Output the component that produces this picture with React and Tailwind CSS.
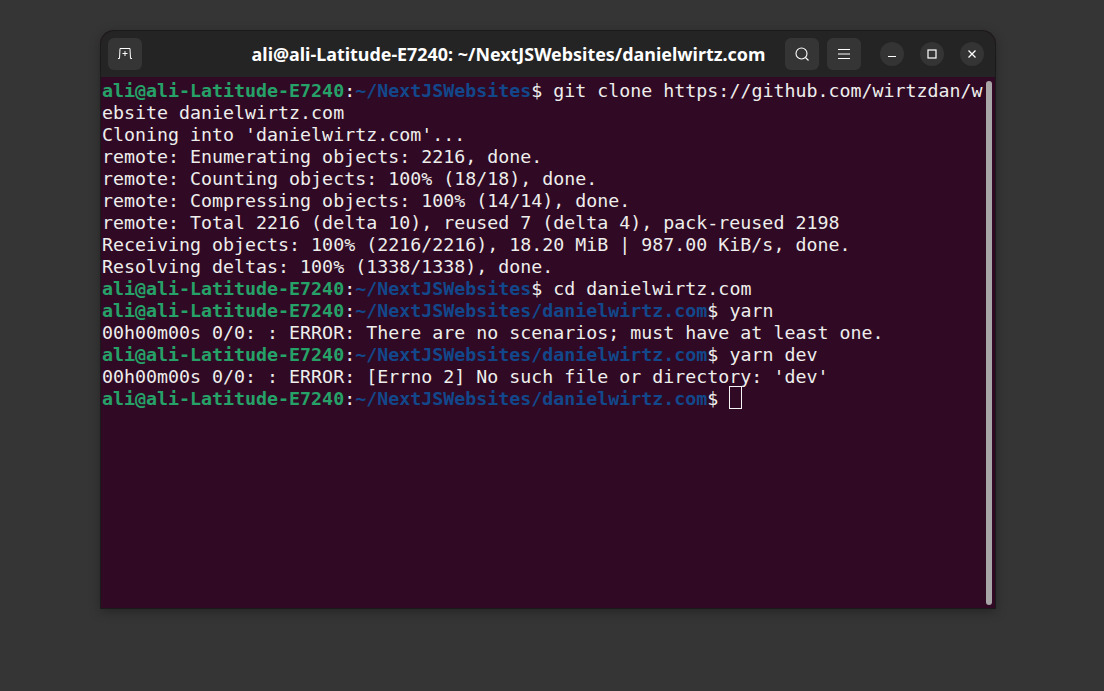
const G = "ali@ali-Latitude-E7240";
function Prompt({ path, cmd, cursor }) {
  return (
    <div>
      <span className="font-bold text-[#26a269]">{G}</span>
      <span>:</span>
      <span className="font-bold text-[#12488b]">{path}</span>
      <span>$ {cmd}</span>
      {cursor && <span className="inline-block w-[13px] h-[23px] -mt-[2px] border border-[#f4f4f4] align-top box-border" />}
    </div>
  );
}
const Out = ({ children }) => <div>{children}</div>;

function IconBtn({ children }) {
  return (
    <div className="w-[34px] h-[32px] rounded-[6px] bg-[#353535] flex items-center justify-center text-white">
      {children}
    </div>
  );
}
function WinBtn({ children }) {
  return (
    <div className="w-[24px] h-[24px] rounded-full bg-[#343434] flex items-center justify-center text-white">
      {children}
    </div>
  );
}

export default function App() {
  return (
    <div className="w-[1104px] h-[691px] bg-[#353535] pt-[31px] pl-[101px] overflow-hidden">
      <div className="w-[894px] h-[577px] rounded-t-[13px] overflow-hidden flex flex-col bg-[#300a24] shadow-[0_0_0_1px_#1a1a1a,0_3px_12px_rgba(0,0,0,0.35)]">
        <div className="h-[46px] shrink-0 bg-[#242424] flex items-center pl-[7px] pr-[11px]">
          <IconBtn>
            <svg width="16" height="12" viewBox="0 0 16 12" fill="none" stroke="currentColor" strokeWidth="1">
              <path d="M1 10.5h1.5l.5-10h10l.5 10H15" />
              <path d="M8 3v5M5.5 5.5h5" />
            </svg>
          </IconBtn>
          <div className="flex-1 pl-[90px] text-center text-white font-bold text-[17.9px] font-['Noto_Sans','Open_Sans',sans-serif] whitespace-nowrap">
            ali@ali-Latitude-E7240: ~/NextJSWebsites/danielwirtz.com
          </div>
          <div className="flex items-center gap-[8px] mr-[19px]">
            <IconBtn>
              <svg width="16" height="16" viewBox="0 0 16 16" fill="none" stroke="currentColor" strokeWidth="1.1">
                <circle cx="7.5" cy="7.5" r="5.5" />
                <path d="M11.5 11.5l3 3" />
              </svg>
            </IconBtn>
            <IconBtn>
              <svg width="16" height="16" viewBox="0 0 16 16" fill="none" stroke="currentColor" strokeWidth="1">
                <path d="M2 3.5h12M2 8h12M2 12.5h12" />
              </svg>
            </IconBtn>
          </div>
          <div className="flex items-center gap-[16px]">
            <WinBtn>
              <svg width="10" height="10" viewBox="0 0 10 10" fill="none" stroke="currentColor" strokeWidth="1">
                <path d="M1 7.5h8" />
              </svg>
            </WinBtn>
            <WinBtn>
              <svg width="10" height="10" viewBox="0 0 10 10" fill="none" stroke="currentColor" strokeWidth="1.2">
                <rect x="1" y="1" width="8" height="8" />
              </svg>
            </WinBtn>
            <WinBtn>
              <svg width="10" height="10" viewBox="0 0 10 10" fill="none" stroke="currentColor" strokeWidth="1.3">
                <path d="M1.5 1.5l7 7M8.5 1.5l-7 7" />
              </svg>
            </WinBtn>
          </div>
        </div>
        <div className="relative flex-1 pl-[1px] pt-[3px] text-[#eeeeec] font-['DejaVu_Sans_Mono',monospace] text-[18.3px] leading-[22px] whitespace-pre">
          <Prompt path="~/NextJSWebsites" cmd="git clone https://github.com/wirtzdan/w" />
          <Out>ebsite danielwirtz.com</Out>
          <Out>Cloning into 'danielwirtz.com'...</Out>
          <Out>remote: Enumerating objects: 2216, done.</Out>
          <Out>remote: Counting objects: 100% (18/18), done.</Out>
          <Out>remote: Compressing objects: 100% (14/14), done.</Out>
          <Out>remote: Total 2216 (delta 10), reused 7 (delta 4), pack-reused 2198</Out>
          <Out>Receiving objects: 100% (2216/2216), 18.20 MiB | 987.00 KiB/s, done.</Out>
          <Out>Resolving deltas: 100% (1338/1338), done.</Out>
          <Prompt path="~/NextJSWebsites" cmd="cd danielwirtz.com" />
          <Prompt path="~/NextJSWebsites/danielwirtz.com" cmd="yarn" />
          <Out>00h00m00s 0/0: : ERROR: There are no scenarios; must have at least one.</Out>
          <Prompt path="~/NextJSWebsites/danielwirtz.com" cmd="yarn dev" />
          <Out>00h00m00s 0/0: : ERROR: [Errno 2] No such file or directory: 'dev'</Out>
          <Prompt path="~/NextJSWebsites/danielwirtz.com" cmd="" cursor />
          <div className="absolute top-[4px] bottom-[3px] right-[3px] w-[6px] rounded-full bg-[#a8a6a7]" />
        </div>
      </div>
    </div>
  );
}
